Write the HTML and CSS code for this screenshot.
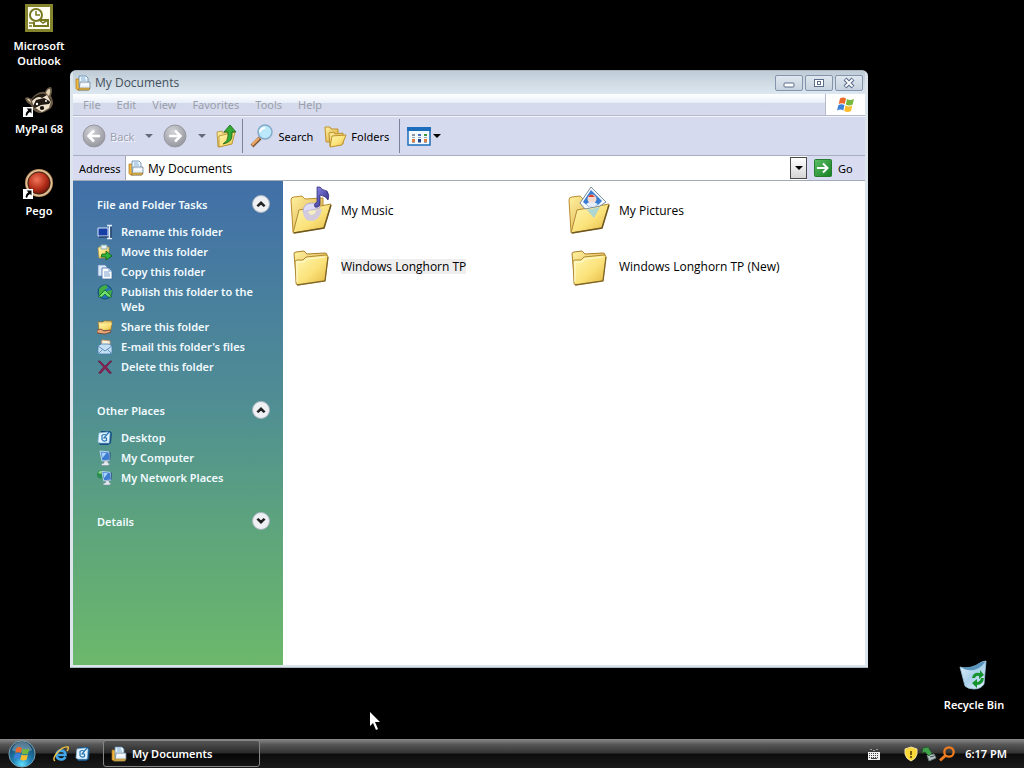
FILE: index.html
```html
<!DOCTYPE html>
<html lang="en">
<head>
<meta charset="utf-8">
<title>My Documents</title>
<link rel="stylesheet" href="styles.css">
</head>
<body>
<svg class="defs" aria-hidden="true">
  <defs>
    <linearGradient id="fold" x1="0" y1="0" x2="1" y2="1"><stop offset="0" stop-color="#fff8b4"/><stop offset=".55" stop-color="#fbe27a"/><stop offset="1" stop-color="#e3b740"/></linearGradient>
    <linearGradient id="foldback" x1="0" y1="0" x2="1" y2="1"><stop offset="0" stop-color="#fff2a0"/><stop offset="1" stop-color="#d7a23a"/></linearGradient>
    <radialGradient id="grey" cx=".4" cy=".3" r=".8"><stop offset="0" stop-color="#d2d3d9"/><stop offset="1" stop-color="#8f9097"/></radialGradient>
    <radialGradient id="orb" cx=".5" cy=".9" r=".9"><stop offset="0" stop-color="#5fe0ff"/><stop offset=".4" stop-color="#1f7fb4"/><stop offset="1" stop-color="#143a55"/></radialGradient>
    <radialGradient id="red" cx=".4" cy=".35" r=".7"><stop offset="0" stop-color="#f0755a"/><stop offset=".6" stop-color="#b52e19"/><stop offset="1" stop-color="#661208"/></radialGradient>
    <linearGradient id="go" x1="0" y1="0" x2="1" y2="1"><stop offset="0" stop-color="#5fbf68"/><stop offset="1" stop-color="#148022"/></linearGradient>
    <linearGradient id="bin" x1="0" y1="0" x2="1" y2="1"><stop offset="0" stop-color="#e8f6fd"/><stop offset=".5" stop-color="#a9d0ea"/><stop offset="1" stop-color="#e4f3fb"/></linearGradient>
    <linearGradient id="note" x1="0" y1="0" x2="1" y2="1"><stop offset="0" stop-color="#8f8cf0"/><stop offset="1" stop-color="#26227a"/></linearGradient>
  </defs>
  <symbol id="docs" viewBox="0 0 16 16">
    <path d="M1 4h4v11H2.500L1 13.500z" fill="#f3b63c" stroke="#a8731c" stroke-width=".7"/>
    <path d="M4 1h7l2 2v9H4z" fill="#e9f5ff" stroke="#5d86a8" stroke-width=".8"/>
    <path d="M6 3h4M6 5h5" stroke="#76a9d0" stroke-width=".9"/>
    <path d="M5 7h10v6l-1.500 2H4z" fill="#e6f1f9" stroke="#6d8496" stroke-width=".8"/>
    <path d="M4 13h11l-1 2H3z" fill="#e6b94c" stroke="#8c6a26" stroke-width=".6"/>
    <path d="M6 9.500h8" stroke="#fff" stroke-width="1.500"/>
  </symbol>
  <symbol id="flag" viewBox="0 0 20 18">
    <path d="M4 2.500Q7 .5 10 2.500L8.700 8Q6 6.300 2.700 8z" fill="#ed6a2d"/>
    <path d="M11 3Q14 5 18 3L16.600 8.500Q13 10.300 9.800 8.500z" fill="#74b83c"/>
    <path d="M2.400 9Q5.700 7.300 8.500 9L7.200 14.500Q4.500 12.600 1 14.500z" fill="#3b82d8"/>
    <path d="M9.500 9.500Q13 11.300 16.300 9.500L15 15Q11.500 17 8.200 15z" fill="#fabd2b"/>
  </symbol>
  <symbol id="folder" viewBox="0 0 38 38">
    <path d="M2 5Q2 3 4 3l8-1 3 3 18-1q2 0 2 2l-2 25L5 35z" fill="url(#foldback)" stroke="#a98028" stroke-width="1"/>
    <path d="M3 13q0-2 2-2l6 0 3-3 20-2q2 0 2 2l-3 24L6 36q-2 0-2-2z" fill="url(#fold)" stroke="#b08a32" stroke-width="1"/>
    <path d="M5 36l28-4 3-24" fill="none" stroke="#6f5720" stroke-width="1.300" opacity=".75"/>
    <path d="M5 33V13h7l3-3 18-2" fill="none" stroke="#fffbd6"/>
  </symbol>
  <symbol id="openback" viewBox="0 0 44 48">
    <path d="M2 14q0-3 3-3l8-1 3 3 18-1v12L6 46H4z" fill="url(#foldback)" stroke="#bb8d30"/>
  </symbol>
  <symbol id="openfront" viewBox="0 0 44 48">
    <path d="M10 24l32-6-7 24L4 47z" fill="url(#fold)" stroke="#b08a32"/>
    <path d="M42 19l-7 23L5 47" fill="none" stroke="#6f5720" stroke-width="1.500"/>
  </symbol>
  <symbol id="shortcut" viewBox="0 0 10 10">
    <path d="M0 0h10v10H0z" fill="#fff"/><path d="M3.500 1.500H8.500V6.500L7 5Q4.500 6 4 9L2.500 8Q2.500 5 5.300 3.300z" fill="#000"/>
  </symbol>
  <symbol id="desk" viewBox="0 0 16 16">
    <path d="M4 1l9-0 2 2-1 10-3 2-8 0-1-2z" fill="#164f80"/>
    <path d="M2 3l9-1 2 1-1 10-9 0-2-1z" fill="#e5f4ff" stroke="#8cc0e6" stroke-width=".7"/>
    <path d="M10 5.500Q7 3.500 5 5.500v4q1.500 2.500 4.500 1V8H7l5-6" fill="none" stroke="#2776b2" stroke-width="1.200"/>
  </symbol>
  <symbol id="monitor" viewBox="0 0 16 16">
    <path d="M3 1l9 1 1 8-8 1z" fill="#3d7bd0" stroke="#bdd9f3"/><path d="M4.500 2.500l5 .5-4 5z" fill="#a5d3ff"/>
    <path d="M7 11h4v2l2 1-2 1.500H5L4 14l3-1z" fill="#e5e9ef" stroke="#74859a" stroke-width=".5"/><path d="M13 2v8" stroke="#204a83"/>
  </symbol>
  <symbol id="up" viewBox="0 0 18 18"><circle cx="9" cy="9" r="8.500" fill="#eef0f4" stroke="#a9b4bf"/><path d="M5 11l4-4 4 4M6 11.500l3-3 3 3" fill="none" stroke="#222" stroke-width="1.500"/></symbol>
  <symbol id="down" viewBox="0 0 18 18"><circle cx="9" cy="9" r="8.500" fill="#eef0f4" stroke="#a9b4bf"/><path d="M5 7l4 4 4-4M6 6.500l3 3 3-3" fill="none" stroke="#222" stroke-width="1.500"/></symbol>
</svg>

<div class="desktop">
  <main class="workspace">
    <nav class="shortcuts" aria-label="Desktop shortcuts">
      <a class="shortcut" href="#">
        <svg class="icon-28" viewBox="0 0 28 28"><path d="M0 0h28v28H0z" fill="#84842c"/><path d="M3 3h22v22H3z" fill="#fffef0"/><path d="M14 16h9v6H9v-4" fill="#fff" stroke="#77771f" stroke-width="2"/><path d="M14 16l4 3 5-3" fill="none" stroke="#77771f" stroke-width="1.500"/><circle cx="11" cy="11" r="6" fill="#fff" stroke="#77771f" stroke-width="2"/><path d="M11 7v4h4M4 19h4M4 22h3" fill="none" stroke="#77771f" stroke-width="1.500"/></svg>
        <span>Microsoft<br>Outlook</span>
      </a>
      <a class="shortcut" href="#">
        <svg class="icon-32" viewBox="0 0 32 32"><path d="M2 12q3-2 6 1l4-4q5-4 10-3 2-5 6-5 2 3 0 9 4 7 0 12-6 5-12 5-7-2-8-8-5-2-6-7z" fill="#6a5b47"/><path d="M23 7q1-4 4-4 1 3-1 7zM4 13q3-1 4 4z" fill="#e4d2b4"/><path d="M9 13q6-6 13-5l6 6-2 6-6-1-6 5-5-5z" fill="#211a14"/><path d="M9 15q6-6 10-3l5-3 4 7-7-4-8 2-3 6zM12 22l6-3 8-1 2-3-2 7-7 4z" fill="#f0e3cd"/><circle cx="14" cy="18" r="1.200" fill="#fff"/><circle cx="23" cy="15" r="1" fill="#fff"/><ellipse cx="19" cy="22" rx="2.200" ry="2" fill="#17120e"/><use href="#shortcut" x="0" y="21" width="10" height="10"/></svg>
        <span>MyPal 68</span>
      </a>
      <a class="shortcut" href="#">
        <svg class="icon-32" viewBox="0 0 32 32"><circle cx="16" cy="15" r="14" fill="#b1875c"/><circle cx="16" cy="15" r="12.500" fill="none" stroke="#dfc298" stroke-width="1.500"/><circle cx="16" cy="15" r="11" fill="url(#red)" stroke="#4b2114"/><use href="#shortcut" x="0" y="21" width="10" height="10"/></svg>
        <span>Pego</span>
      </a>
    </nav>

    <a class="shortcut recycle" href="#">
      <svg class="icon-32" viewBox="0 0 32 32"><path d="M2 8q9 3 17-2 5-4 9-4l-2 23q-3 5-10 5-6 0-9-3z" fill="url(#bin)" stroke="#9cc4dd" stroke-width=".8"/><path d="M3 8q8 1 15-2 6-4 9-3-4 6-11 8-8 1-13-3z" fill="#5a94bb"/><path d="M14 19q1-6 8-5l0-3 4 5-5 4v-3q-3-1-4 2zM26 19q-1 7-7 7v3l-5-5 5-4v3q3 0 4-4z" fill="#15932f"/></svg>
      <span>Recycle Bin</span>
    </a>

    <section class="window" aria-label="My Documents">
      <header class="titlebar">
        <svg class="icon-16"><use href="#docs"/></svg>
        <h1>My Documents</h1>
        <button class="wbtn" aria-label="Minimize"><svg viewBox="0 0 26 14"><rect x="8" y="7" width="10" height="4" rx="1" fill="#fff" stroke="#5b6d8b"/></svg></button>
        <button class="wbtn" aria-label="Restore"><svg viewBox="0 0 26 14"><rect x="8.500" y="3.500" width="9" height="7" fill="#fff" stroke="#5b6d8b"/><rect x="11.500" y="5.500" width="3" height="3" fill="#fff" stroke="#5b6d8b"/></svg></button>
        <button class="wbtn" aria-label="Close"><svg viewBox="0 0 26 14"><path d="M9 3l8 8M17 3l-8 8" stroke="#5b6d8b" stroke-width="4"/><path d="M9.500 3.500l7 7M16.500 3.500l-7 7" stroke="#fff" stroke-width="1.800"/></svg></button>
      </header>
      <div class="menurow">
        <div class="menus"><button>File</button><button>Edit</button><button>View</button><button>Favorites</button><button>Tools</button><button>Help</button></div>
        <div class="brand"><svg class="flag"><use href="#flag"/></svg></div>
      </div>
      <div class="toolbar">
        <button class="tool muted"><svg class="icon-24" viewBox="0 0 24 24"><circle cx="12" cy="12" r="11" fill="url(#grey)" stroke="#9799a1"/><path d="M18 12H7M12 6.500L6.500 12l5.500 5.500" fill="none" stroke="#fff" stroke-width="2.500"/></svg>Back</button>
        <button class="drop" aria-label="Back history"><svg viewBox="0 0 8 4"><path d="M0 0h8L4 4z" fill="#666b7b"/></svg></button>
        <button class="tool" aria-label="Forward"><svg class="icon-24" viewBox="0 0 24 24"><circle cx="12" cy="12" r="11" fill="url(#grey)" stroke="#9799a1"/><path d="M6 12h11M12 6.500l5.500 5.500-5.500 5.500" fill="none" stroke="#fff" stroke-width="2.500"/></svg></button>
        <button class="drop" aria-label="Forward history"><svg viewBox="0 0 8 4"><path d="M0 0h8L4 4z" fill="#666b7b"/></svg></button>
        <button class="tool" aria-label="Up"><svg class="icon-24" viewBox="0 0 24 24"><path d="M1 8l5-1 1 2 10-2-2 13-13 3z" fill="url(#foldback)" stroke="#b18b2f" stroke-width=".8"/><path d="M3 12l16-4-3 12-13 3z" fill="url(#fold)" stroke="#b18b2f" stroke-width=".8"/><path d="M7 20q5-3 5-8V8H8l6-7 6 7h-4v4q0 6-9 8z" fill="#35ab35" stroke="#15651b" stroke-width=".8"/></svg></button>
        <span class="sep"></span>
        <button class="tool"><svg class="icon-24" viewBox="0 0 24 24"><path d="M10 14l-8 8" stroke="#7d5433" stroke-width="4"/><path d="M9 14l-7 7" stroke="#e8a667" stroke-width="2.500"/><circle cx="15" cy="8" r="7" fill="#bce8fb" stroke="#85a9c9" stroke-width="1.500"/><path d="M10 8q1-4 5-4" fill="none" stroke="#fff" stroke-width="2"/></svg>Search</button>
        <button class="tool folders"><svg class="icon-24" viewBox="0 0 24 24"><path d="M2 3h5l1 2h7v13H3z" fill="url(#foldback)" stroke="#bd932c"/><path d="M6 9l5-1 1 2 8-1v11l-13 2z" fill="url(#foldback)" stroke="#bd932c"/><path d="M9 12l14-1-4 10-12 2z" fill="url(#fold)" stroke="#bd932c"/></svg>Folders</button>
        <span class="sep"></span>
        <button class="tool views" aria-label="Views"><svg class="icon-24" viewBox="0 0 24 24"><rect x="1" y="4" width="22" height="17" fill="#f3faff" stroke="#1c6dbb" stroke-width="1.500"/><path d="M0 3h24v4H0z" fill="#1c6dbb"/><path d="M5 10h3v2H5z" fill="#8d949f"/><path d="M11 10h3v2h-3z" fill="#4a70c4"/><path d="M17 10h3v2h-3z" fill="#3a9840"/><path d="M5 13h3v1H5zM11 13h3v1h-3zM17 13h3v1h-3zM5 18h3v1H5zM11 18h3v1h-3zM17 18h3v1h-3z" fill="#9aa5b5"/><path d="M5 15h3v3H5zM17 15h3v3h-3z" fill="#dd7e42"/><path d="M11 15h3v3h-3z" fill="#1f438e"/></svg><svg class="arrow" viewBox="0 0 8 4"><path d="M0 0h8L4 4z" fill="#000"/></svg></button>
      </div>
      <div class="address">
        <label for="addr">Address</label>
        <div class="field"><svg class="icon-16"><use href="#docs"/></svg><input id="addr" type="text" value="My Documents"><button aria-label="Show addresses"><svg class="arrow" viewBox="0 0 8 4"><path d="M0 0h8L4 4z" fill="#000"/></svg></button></div>
        <button class="go"><svg class="icon-18" viewBox="0 0 18 18"><rect x=".5" y=".5" width="17" height="17" rx="1" fill="url(#go)" stroke="#267c30"/><path d="M3 9h10M9 4.500L13.500 9 9 13.500" fill="none" stroke="#fff" stroke-width="2"/></svg>Go</button>
      </div>
      <div class="content">
        <aside class="side">
          <section>
            <h2>File and Folder Tasks<button aria-label="Collapse tasks"><svg><use href="#up"/></svg></button></h2>
            <ul>
              <li><svg class="icon-16" viewBox="0 0 16 16"><path d="M1 4h10v8H1z" fill="#153fa4" stroke="#dbe8ff"/><path d="M2 13h9" stroke="#10254f"/><path d="M10 1.500h5M12.500 2v12M10 14.500h5" stroke="#e7eefa" stroke-width="1.300"/><path d="M14 3v11" stroke="#1b2e52"/></svg><a href="#">Rename this folder</a></li>
              <li><svg class="icon-16" viewBox="0 0 16 16"><path d="M1 4l3-2 2 1h6v11H2z" fill="url(#fold)" stroke="#a98d3c" stroke-width=".7"/><path d="M4 1h6v4H4z" fill="#e8f2fc" stroke="#8aa"/><path d="M5 10h4V7l6 5-6 4v-3H4z" fill="#2eb43a" stroke="#0e5a18" stroke-width=".8"/></svg><a href="#">Move this folder</a></li>
              <li><svg class="icon-16" viewBox="0 0 16 16"><path d="M1 1h7l2 2v9H1z" fill="#d9e9fa" stroke="#6688b5" stroke-width=".7"/><path d="M5 4h7l3 3v8H5z" fill="#fff" stroke="#3f6aa5" stroke-width=".8"/><path d="M12 4v3h3M7 8h5M7 10h6M7 12h6" fill="none" stroke="#6794c8" stroke-width=".9"/></svg><a href="#">Copy this folder</a></li>
              <li><svg class="icon-16" viewBox="0 0 16 16"><circle cx="8" cy="8" r="7" fill="#2671b8" stroke="#0d4a6e"/><path d="M2 5q3-4 7-4l2 3-4 2-1 4-4 1zM10 7l5-1-1 6-3 1z" fill="#42ad43"/><path d="M8 6l7 7h-4l-3-3-3 3H1z" fill="#6fe06b" stroke="#11631e" stroke-width=".7"/></svg><a href="#">Publish this folder to the Web</a></li>
              <li><svg class="icon-16" viewBox="0 0 16 16"><path d="M1 3h5l1-1h8l-1 9H2z" fill="url(#foldback)" stroke="#98702b" stroke-width=".7"/><path d="M3 5l12-1-2 7H2z" fill="url(#fold)"/><path d="M0 11l4-1 3 2 6-1 1 2-6 2-8-1z" fill="#e6a57a" stroke="#704026" stroke-width=".8"/></svg><a href="#">Share this folder</a></li>
              <li><svg class="icon-16" viewBox="0 0 16 16"><path d="M5 1l8 1v7H4z" fill="#f8f2df" stroke="#d89c63" stroke-width=".8"/><path d="M1 7l3-2h8l3 2v7l-2 1H2l-1-1z" fill="#c6dff5" stroke="#457bab" stroke-width=".8"/><path d="M1 7l7 5 7-5M2 14l4-4M14 14l-4-4" fill="none" stroke="#5e92be"/></svg><a href="#">E-mail this folder's files</a></li>
              <li><svg class="icon-16" viewBox="0 0 16 16"><path d="M1 2h2l5 5 5-5h2L9.500 8l5 6-2 .5L8 9.500l-4.500 5-2-.5 5-6z" fill="#8d2052" stroke="#5d1743" stroke-width=".6"/></svg><a href="#">Delete this folder</a></li>
            </ul>
          </section>
          <section>
            <h2>Other Places<button aria-label="Collapse places"><svg><use href="#up"/></svg></button></h2>
            <ul>
              <li><svg class="icon-16"><use href="#desk"/></svg><a href="#">Desktop</a></li>
              <li><svg class="icon-16"><use href="#monitor"/></svg><a href="#">My Computer</a></li>
              <li><svg class="icon-16" viewBox="0 0 16 16"><circle cx="4" cy="4.500" r="4" fill="#2a8d50"/><path d="M1 3q2-3 4-2l-1 3z" fill="#8bd77b"/><use href="#monitor" x="2" y="0" width="15" height="16"/></svg><a href="#">My Network Places</a></li>
            </ul>
          </section>
          <section>
            <h2>Details<button aria-label="Expand details"><svg><use href="#down"/></svg></button></h2>
          </section>
        </aside>
        <div class="files">
          <a class="file" href="#"><svg class="icon-big" viewBox="0 0 44 48"><use href="#openback"/><use href="#openfront"/><path d="M14 26q0-9 9-9 7 0 8 5z" fill="#dedbf5" stroke="#a9a3d6" stroke-width=".8"/><path d="M14 25q0 10 9 10 8-1 10-12z" fill="#cbc6ec" opacity=".85"/><path d="M19 25q1 4 4 4 4-1 4-5z" fill="#f4edc0"/><path d="M28 1l3 0q2 3 7 4 3 4 1 9-2-4-8-5v9q-1 4-5 3-2-3 2-5z" fill="url(#note)" stroke="#292468" stroke-width=".7"/></svg><span>My Music</span></a>
          <a class="file" href="#"><svg class="icon-big" viewBox="0 0 44 48"><use href="#openback"/><use href="#openfront"/><path d="M24 1l15 15-6 4-15 3-5-6z" fill="#f5faff" stroke="#7c8d9e"/><path d="M24 4l11 11-4 4-9 2-6-5z" fill="#387bd2"/><circle cx="25" cy="13" r="4.500" fill="#f5d9cf"/><path d="M21 11q3-5 7 0z" fill="#d74231"/><path d="M19 18q5-4 12 0l-3 2-6 1z" fill="#e5edf8"/><path d="M20 24l13-3-6 11z" fill="#9fd3dd" opacity=".85"/></svg><span>My Pictures</span></a>
          <a class="file" href="#"><svg class="icon-fold"><use href="#folder"/></svg><span class="selected">Windows Longhorn TP</span></a>
          <a class="file" href="#"><svg class="icon-fold"><use href="#folder"/></svg><span>Windows Longhorn TP (New)</span></a>
        </div>
      </div>
    </section>
  </main>

  <footer class="taskbar">
    <button class="start" aria-label="Start"><svg viewBox="0 0 30 30"><circle cx="15" cy="15" r="14" fill="url(#orb)" stroke="#7fa6b8"/><path d="M4 11q3-9 11-9t11 9q-11 5-22 0z" fill="#fff" opacity=".28"/><use href="#flag" x="5" y="6" width="20" height="18"/></svg></button>
    <button class="quick" aria-label="Internet Explorer"><svg class="icon-16" viewBox="0 0 16 16"><path d="M12.500 11Q11 13.500 8 13.500 3.500 13 3.500 9 4 4.500 8.200 4.500 12.500 5 12.500 9H5" fill="none" stroke="#42a7ea" stroke-width="2.600"/><path d="M2 15Q-1 13 4 7 10 0 15 1q1 1-1 4" fill="none" stroke="#f2c540" stroke-width="1.400"/></svg></button>
    <button class="quick" aria-label="Show desktop"><svg class="icon-16"><use href="#desk"/></svg></button>
    <button class="task"><svg class="icon-16"><use href="#docs"/></svg>My Documents</button>
    <div class="tray">
      <svg class="icon-16 keyboard" viewBox="0 0 16 16"><path d="M4 3.500h2M7 4.500h2M10 3.500h2" fill="none" stroke="#999"/><path d="M2 6h12v8H2z" fill="#eee"/><path d="M3 7.500h10M3 9.500h10M3 11.500h10" stroke="#444" stroke-dasharray="1 1"/><path d="M5 12.500h6" stroke="#444"/></svg>
      <svg class="icon-16" viewBox="0 0 16 16"><path d="M8 1l6 2v5q-1 5-6 7-5-2-6-7V3z" fill="#f8d737" stroke="#eee0a0"/><path d="M8 5v4M8 10v2" stroke="#463500" stroke-width="1.500"/></svg>
      <svg class="icon-16" viewBox="0 0 16 16"><path d="M6 9l7-1 2 4-7 3z" fill="#b7c2c4" stroke="#68797a"/><path d="M9 11l4-1" stroke="#3b4a4a"/><path d="M2 2l6-1v2l3 4-3 3-4-4-3 1z" fill="#41a24d" stroke="#19561f" stroke-width=".7"/></svg>
      <svg class="icon-16" viewBox="0 0 16 16"><circle cx="10" cy="6" r="4.700" fill="none" stroke="#ee7c20" stroke-width="2.300"/><path d="M6.500 9.500L1 14.500" stroke="#ee7c20" stroke-width="3"/></svg>
      <time>6:17 PM</time>
    </div>
  </footer>
  <svg class="cursor" viewBox="0 0 12 20" aria-hidden="true"><path d="M1 1v14l3-3 3 7 2-1-3-7h5z" fill="#fff"/></svg>
</div>
</body>
</html>
```

FILE: styles.css
```css
* { box-sizing: border-box; }
body { margin: 0; background: #000; color: #000; font: 11px/15px "Noto Sans", "Open Sans", sans-serif; }
button, input { font: inherit; color: inherit; margin: 0; padding: 0; border: 0; background: none; }
a { color: inherit; text-decoration: none; }
h1, h2, ul { margin: 0; padding: 0; font: inherit; list-style: none; }
svg { display: block; flex: none; }
.defs { position: absolute; width: 0; height: 0; }
.icon-16 { width: 16px; height: 16px; }
.icon-18 { width: 18px; height: 18px; }
.icon-24 { width: 24px; height: 24px; }
.icon-28 { width: 28px; height: 28px; }
.icon-32 { width: 32px; height: 32px; }
.arrow { width: 8px; height: 4px; }

.desktop { height: 100vh; display: flex; flex-direction: column; position: relative; overflow: hidden; }
.workspace { flex: 1; position: relative; min-height: 0; }
.shortcuts { width: 78px; padding-top: 4px; display: flex; flex-direction: column; gap: 16px; }
.shortcut { display: flex; flex-direction: column; align-items: center; gap: 3px; min-height: 66px; color: #fff; text-align: center; font-weight: 600; }
.shortcut .icon-28 { margin-bottom: 3px; }
.recycle { position: absolute; right: 10px; bottom: 14px; width: 80px; gap: 6px; }

.window { position: absolute; inset: 70px 156px 71px 70px; display: flex; flex-direction: column; padding: 0 3px 2px; background: #dce4ec; border: 1px solid #aab6c0; border-width: 1px 0; border-radius: 6px 6px 0 0; }
.titlebar { display: flex; align-items: center; gap: 4px; height: 23px; padding: 0 2px; background: linear-gradient(#bfccd7, #cfdae3 50%, #dce8f1); color: #44505c; }
.titlebar h1, .field input, .file { font-family: "Open Sans", "Noto Sans", sans-serif; font-size: 12px; }
.titlebar h1 { flex: 1; }
.wbtn { width: 28px; height: 16px; border: 1px solid #8593ad; border-radius: 2px; background: linear-gradient(#dfe7ef, #c6d2df); }
.titlebar .wbtn + .wbtn { margin-left: -2px; }

.menurow { display: flex; height: 22px; background: linear-gradient(#fff, #eaf0f9 40%, #d5daeb 45%, #d6daec); border-bottom: 1px solid #b4b9cb; color: #9a9fac; }
.menus { flex: 1; display: flex; align-items: center; gap: 16px; padding-left: 10px; }
.brand { width: 40px; display: grid; place-items: center; background: #fff; border-left: 1px solid #b4b9cb; }
.flag { width: 20px; height: 18px; }

.toolbar { display: flex; align-items: center; height: 40px; padding: 0 9px; background: #d6daee; border-top: 1px solid #f3f5fb; border-bottom: 1px solid #a9afc0; }
.tool { display: flex; align-items: center; gap: 4px; }
.muted { color: #9da1b0; text-shadow: 1px 1px #f5f7fd; }
.drop { width: 29px; height: 24px; display: grid; place-items: center; }
.drop svg { width: 8px; height: 4px; }
.sep { width: 1px; height: 34px; margin: 0 7px 0 2px; background: #7b839c; }
.folders { margin: 0 8px 0 10px; }
.views { gap: 2px; }

.address { display: flex; align-items: center; height: 25px; background: #d9dcf0; border-bottom: 1px solid #a3aab8; }
.address label { width: 52px; padding-left: 6px; }
.field { flex: 1; display: flex; align-items: center; gap: 4px; align-self: stretch; padding-left: 2px; background: #fff; border-left: 1px solid #a3aab8; }
.field input { flex: 1; min-width: 0; outline: 0; }
.field button { width: 17px; height: 22px; display: grid; place-items: center; border: 1px solid #4a4a4a; background: linear-gradient(#fff, #d5d5d5); }
.go { display: flex; align-items: center; gap: 6px; width: 58px; padding-left: 7px; }

.content { flex: 1; display: flex; min-height: 0; background: #fff; }
.side { width: 210px; padding: 13px 13px 0 24px; display: flex; flex-direction: column; gap: 26px; background: linear-gradient(#416fa8, #4f8d94 45%, #5fa77a 75%, #6cb86b); color: #f2fbff; font-weight: 600; }
.side h2 { display: flex; align-items: center; justify-content: space-between; height: 20px; }
.side h2 svg { width: 18px; height: 18px; }
.side ul { display: flex; flex-direction: column; gap: 5px; margin-top: 10px; }
.side li { display: flex; gap: 8px; }
.side li svg { margin-bottom: -1px; }
.files { flex: 1; display: grid; grid-template-columns: 278px 278px; grid-auto-rows: 56px; align-content: start; padding: 1px 0 0 6px; }
.file { display: flex; align-items: center; }
.icon-big { width: 44px; height: 48px; margin-right: 8px; }
.icon-fold { width: 38px; height: 38px; margin: 4px 11px 0 3px; }
.selected { background: #eee; }

.taskbar { display: flex; align-items: center; height: 29px; padding: 0 17px 0 7px; background: linear-gradient(#8a8a8a, #555 20%, #343434 48%, #0c0c0c 52%, #1b1b1b); color: #fff; font-weight: 600; }
.start { width: 30px; height: 28px; margin-right: 16px; }
.start svg { width: 30px; height: 28px; }
.quick { width: 22px; }
.task { display: flex; align-items: center; gap: 5px; width: 157px; height: 27px; margin-left: 6px; padding-left: 7px; border: 1px solid #858585; border-radius: 3px; background: linear-gradient(#555, #292929 48%, #050505 52%, #151515); }
.tray { margin-left: auto; display: flex; align-items: center; gap: 2px; }
.keyboard { margin-right: 19px; }
.tray time { margin-left: 8px; }
.cursor { position: absolute; left: 369px; top: 711px; width: 12px; height: 20px; }
```
